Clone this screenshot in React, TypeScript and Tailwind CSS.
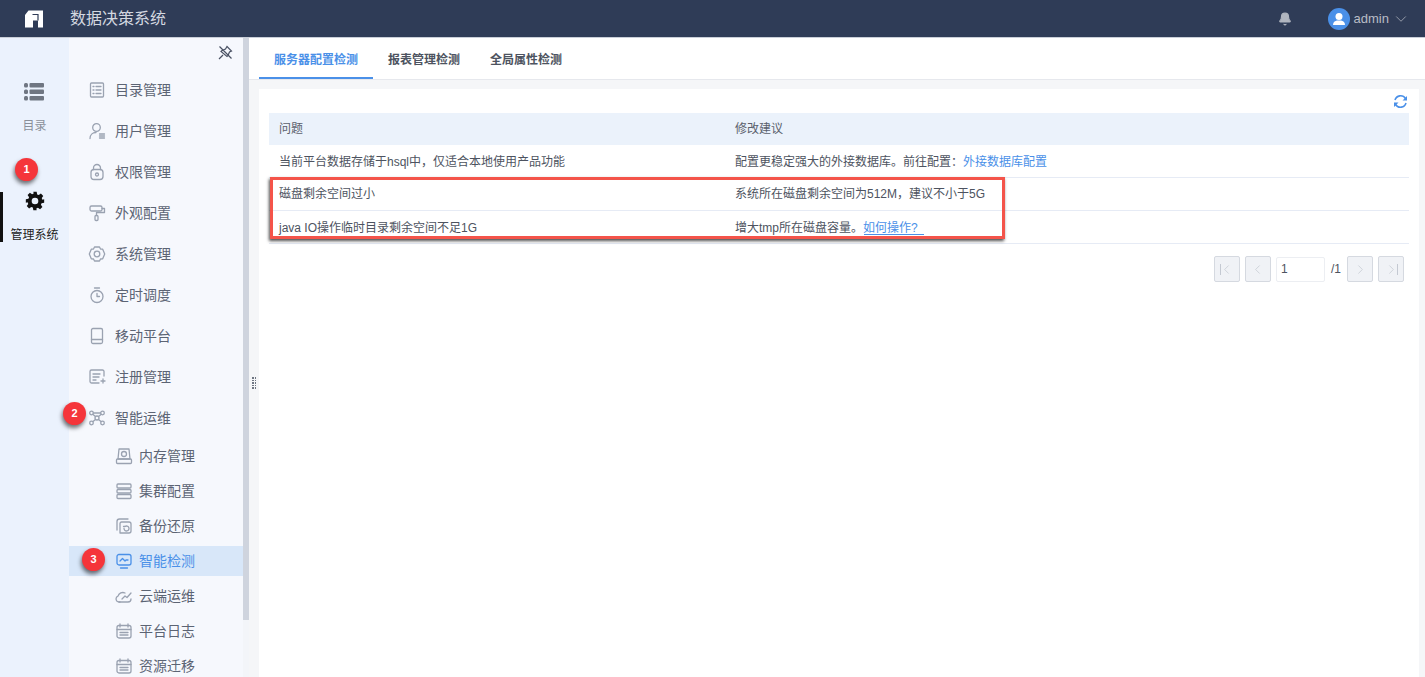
import { Bell, ChevronDown, ChevronLeft, ChevronRight } from 'lucide-react';
import type { ReactNode } from 'react';

const FONT = "font-['Liberation_Sans','Noto_Sans_CJK_SC',sans-serif]";

function Ico({ children }: { children: ReactNode }) {
  return (
    <svg width="18" height="18" viewBox="0 0 18 18" fill="none" stroke="currentColor" strokeWidth="1.3" strokeLinecap="round" strokeLinejoin="round">
      {children}
    </svg>
  );
}

const icons: Record<string, ReactNode> = {
  dir: <><rect x="2.500" y="2" width="13" height="14" rx="1" /><path d="M5 5.500h1M8 5.500h5M5 9h1M8 9h5M5 12.500h1M8 12.500h5" /></>,
  user: <><circle cx="8.500" cy="5.500" r="3.800" /><path d="M2 16.500c0-3.500 2.500-6 6-6M11.500 12h5M11.500 14h5M11.500 16h5" /></>,
  lock: <><rect x="3" y="6.500" width="12" height="10" rx="3" /><path d="M5.500 6.500V5a3.500 3.500 0 0 1 7 0v1.500" /><circle cx="9" cy="11.500" r="1.500" /></>,
  roller: <><rect x="2" y="2" width="12" height="5" rx="1.500" /><path d="M14 4.500h2.500v4H8.500v3" /><rect x="7" y="11.500" width="3" height="5" rx="1" /></>,
  gear: <><path d="M6.500 2h5l1 2 2.200.2 2 4.800-2 4.800-2.200.2-1 2h-5l-1-2-2.200-.2L1.300 9l2-4.800L5.500 4z" /><circle cx="9" cy="9" r="2.800" /></>,
  timer: <><circle cx="9" cy="10.500" r="6" /><path d="M9 7.500v3h2.500M6.500 2h5" /></>,
  mobile: <><rect x="3.500" y="1.500" width="11" height="15" rx="1.500" /><path d="M3.500 12.500h11" /></>,
  reg: <><path d="M16 8V3.500a1.500 1.500 0 0 0-1.500-1.500h-11A1.500 1.500 0 0 0 2 3.500v10A1.500 1.500 0 0 0 3.500 15H11" /><path d="M5 6h7M5 9h6M5 12h3M13 13h4M15 11v4" /></>,
  ops: <><circle cx="3.500" cy="4" r="1.800" /><circle cx="14.500" cy="4" r="1.800" /><circle cx="3.500" cy="14" r="1.800" /><circle cx="14.500" cy="14" r="1.800" /><circle cx="9" cy="9" r="2" /><path d="M5 5.500l2.500 2M13 5.500l-2.500 2M5 12.500l2.500-2M13 12.500l-2.500-2M5.500 4h7" /></>,
  memory: <><path d="M4 2h10l1 10H3z" /><rect x="1.500" y="12" width="15" height="4.500" rx="1" /><circle cx="9" cy="7" r="2.500" /></>,
  cluster: <><rect x="2" y="2" width="14" height="4" rx="1" /><rect x="2" y="7.500" width="14" height="3.500" rx="1" /><rect x="2" y="12.500" width="14" height="4" rx="1" /></>,
  backup: <><path d="M13 2H4.500A2.500 2.500 0 0 0 2 4.500V13" /><path d="M5 16V6.500A1.500 1.500 0 0 1 6.500 5H14a2 2 0 0 1 2 2v7a2 2 0 0 1-2 2z" /><path d="M9 11.500a2.500 2.500 0 1 0 1-2H8.500" /></>,
  check: <><rect x="2" y="2.500" width="14" height="10.500" rx="2" /><path d="M5.500 16h7M5 9l2.500-2.500L10 9l1-1h2" /></>,
  cloud: <><path d="M5 15H4a3 3 0 0 1-1-5.800A5 5 0 0 1 10 6" /><path d="M4 15h9a3 3 0 0 0 3-3M7 12l3-3 2 1.500L16 6" /></>,
  log: <><rect x="2" y="3.500" width="14" height="12.500" rx="2" /><path d="M5 2v3M13 2v3M2 7.500h14M5 10.500h8M5 13h8" /></>,
};

const topMenu = [
  ['目录管理', 'dir'],
  ['用户管理', 'user'],
  ['权限管理', 'lock'],
  ['外观配置', 'roller'],
  ['系统管理', 'gear'],
  ['定时调度', 'timer'],
  ['移动平台', 'mobile'],
  ['注册管理', 'reg'],
  ['智能运维', 'ops'],
];

const subMenu = [
  ['内存管理', 'memory'],
  ['集群配置', 'cluster'],
  ['备份还原', 'backup'],
  ['智能检测', 'check'],
  ['云端运维', 'cloud'],
  ['平台日志', 'log'],
  ['资源迁移', 'log'],
];

function Badge({ n, className }: { n: number; className: string }) {
  return (
    <div className={`absolute flex h-[23px] w-[23px] items-center justify-center rounded-full bg-[#f5353a] text-[11px] font-bold text-white shadow-[-1px_3px_4px_rgba(0,0,0,0.55)] ${className}`}>
      {n}
    </div>
  );
}

function PageBtn({ children }: { children: ReactNode }) {
  return (
    <div className="flex h-[26px] w-[26px] items-center justify-center rounded-[2px] border border-[#d5d9e0] bg-[#f0f2f6] text-[#c4c9d2]">
      {children}
    </div>
  );
}

export default function App() {
  return (
    <div className={`flex h-[677px] w-[1425px] flex-col overflow-hidden bg-white ${FONT}`}>
      {/* шапка */}
      <header className="flex h-[38px] shrink-0 items-center border-b border-[#c9ced8] bg-[#2f3c57]">
        <svg className="ml-[25px]" width="18" height="18" viewBox="0 0 18 18">
          <path fill="#fff" d="M0 5 3.500 0.500H18V17.500H13V10.500H8V17.500H0z" />
          <path fill="none" stroke="#2f3c57" strokeWidth="1.200" d="M7.500 4.500H13V10.500" />
        </svg>
        <span className="ml-[27px] text-base leading-none text-[#d4d8e0]">数据决策系统</span>
        <Bell className="ml-auto text-[#b0b5bf]" size={14} fill="#b0b5bf" />
        <div className="ml-[36px] flex h-[22px] w-[22px] items-center justify-center overflow-hidden rounded-full bg-[#4a90e8]">
          <svg width="14" height="14" viewBox="0 0 14 14" fill="#fff">
            <circle cx="7" cy="4.500" r="3.500" />
            <path d="M1 13c0-3 2-4 4-4.500h4c2 .5 4 1.500 4 4.500z" />
          </svg>
        </div>
        <span className="ml-[4px] text-[13px] text-[#b9bdc6]">admin</span>
        <ChevronDown className="mr-[15px] ml-[3px] text-[#a9aeb9]" size={18} strokeWidth={1.100} />
      </header>

      <div className="flex min-h-0 flex-1">
        {/* левая колонка */}
        <aside className="relative flex w-[69px] shrink-0 flex-col items-center bg-[#ebf2fd]">
          <div className="mt-[45px] flex flex-col items-center text-[#6f7682]">
            <svg width="20" height="18" viewBox="0 0 20 18" fill="currentColor">
              <rect x="0" y="0" width="4" height="4.500" rx="1.500" />
              <rect x="5.500" y="0" width="14.500" height="4.500" rx="1" />
              <rect x="0" y="6.500" width="4" height="4.500" rx="1.500" />
              <rect x="5.500" y="6.500" width="14.500" height="4.500" rx="1" />
              <rect x="0" y="13" width="4" height="4.500" rx="1.500" />
              <rect x="5.500" y="13" width="14.500" height="4.500" rx="1" />
            </svg>
            <span className="mt-[18px] text-xs leading-[14px] text-[#8a909a]">目录</span>
          </div>
          <div className="mt-[59px] flex h-[50px] w-full flex-col items-center border-l-[3px] border-[#111] pr-[3px]">
            <svg className="mt-[-1px]" width="22" height="22" viewBox="0 0 24 24" fill="#111">
              <path fillRule="evenodd" d="M10 1h4l.6 3.100 1.900.8 2.600-1.800 2.800 2.800-1.800 2.600.8 1.900L23 10v4l-3.100.6-.8 1.900 1.800 2.600-2.800 2.800-2.600-1.800-1.900.8L14 23h-4l-.6-3.100-1.900-.8-2.600 1.800-2.800-2.800 1.800-2.600-.8-1.900L1 14v-4l3.100-.6.8-1.900-1.800-2.600 2.800-2.800 2.600 1.800 1.900-.8zM12 8a4 4 0 1 0 0 8 4 4 0 0 0 0-8z" />
            </svg>
            <span className="mt-[17px] text-xs leading-[14px] whitespace-nowrap text-[#222]">管理系统</span>
          </div>
          <Badge n={1} className="top-[120px] left-[15px]" />
          <Badge n={2} className="top-[364px] left-[63px] z-10" />
          <Badge n={3} className="top-[510px] left-[82px] z-10" />
        </aside>

        {/* меню */}
        <nav className="relative flex w-[174px] shrink-0 flex-col overflow-hidden bg-[#f6f8fd]">
          <svg className="absolute top-[7px] left-[149px] text-[#4a5264]" width="15" height="15" viewBox="0 0 15 15" fill="none" stroke="currentColor" strokeWidth="1.200">
            <path d="M9 1.500l4.500 4.500-2 1-1.500 3.500-1 1L3 6.500l1-1 3.500-1.500zM5 10l-4 4M1.500 1.500l12 12" />
          </svg>
          <div className="mt-[31px] flex flex-col">
            {topMenu.map(([label, icon]) => (
              <div key={label} className="flex h-[41px] items-center pl-[19px] text-[#5c6474]">
                <span className="text-[#9aa2b1]"><Ico>{icons[icon]}</Ico></span>
                <span className="ml-[9px] text-sm">{label}</span>
              </div>
            ))}
          </div>
          <div className="flex flex-col">
            {subMenu.map(([label, icon]) => (
              <div key={label} className="flex h-[35px] shrink-0 items-center">
                <div className={`flex h-[30px] w-full items-center pl-[46px] ${label === '智能检测' ? 'bg-[#d8e7f9] text-[#4a90e8]' : 'text-[#5c6474]'}`}>
                  <span className={label === '智能检测' ? 'text-[#4a90e8]' : 'text-[#9aa2b1]'}>
                    <Ico>{icons[icon]}</Ico>
                  </span>
                  <span className="ml-[6px] text-sm">{label}</span>
                </div>
              </div>
            ))}
          </div>
        </nav>

        {/* полоса прокрутки */}
        <div className="flex w-[6px] shrink-0 flex-col bg-[#f3f5f9]">
          <div className="h-[582px] bg-[#cfd4de]" />
        </div>

        {/* контент */}
        <main className="flex min-w-0 flex-1 flex-col bg-[#f5f6f8]">
          <div className="flex h-[42px] shrink-0 items-end border-b border-[#e6e8ed] bg-white pl-[10px] text-xs font-bold text-[#4d5360]">
            <div className="flex h-[41px] w-[114px] items-center justify-center border-b-2 border-[#4a90e8] pt-[4px] text-[#4a90e8]">服务器配置检测</div>
            <div className="ml-[15px] flex h-[41px] items-center pt-[2px]">报表管理检测</div>
            <div className="ml-[30px] flex h-[41px] items-center pt-[2px]">全局属性检测</div>
          </div>

          <div className="relative mt-[9px] mr-[6px] ml-[10px] flex-1 bg-white px-[10px] pt-[24px]">
            <svg className="absolute top-[5px] right-[11px] text-[#4a90e8]" width="15" height="15" viewBox="0 0 15 15" fill="none" stroke="currentColor" strokeWidth="1.600">
              <path d="M2 6a5.800 5.800 0 0 1 10.500-1.500M13 9a5.800 5.800 0 0 1-10.500 1.500" />
              <path fill="currentColor" stroke="none" d="M14 2v4.500H9.500zM1 13V8.500h4.500z" />
            </svg>
            <div className="flex h-[32px] items-center bg-[#ebf2fb] text-xs text-[#5a606c]">
              <div className="w-[456px] pl-[10px]">问题</div>
              <div className="pl-[10px]">修改建议</div>
            </div>
            <div className="flex h-[33px] items-center border-b border-[#e6ebf5] pt-[1px] text-xs text-[#4d5360]">
              <div className="w-[456px] pl-[10px]">当前平台数据存储于hsql中，仅适合本地使用产品功能</div>
              <div className="pl-[10px]">配置更稳定强大的外接数据库。前往配置：<span className="text-[#4a90e8]">外接数据库配置</span></div>
            </div>
            <div className="flex h-[33px] items-center border-b border-[#e6ebf5] text-xs text-[#4d5360]">
              <div className="w-[456px] pl-[10px]">磁盘剩余空间过小</div>
              <div className="pl-[10px]">系统所在磁盘剩余空间为512M，建议不小于5G</div>
            </div>
            <div className="flex h-[33px] items-center border-b border-[#e6ebf5] pt-[1px] text-xs text-[#4d5360]">
              <div className="w-[456px] pl-[10px]">java IO操作临时目录剩余空间不足1G</div>
              <div className="pl-[10px]">增大tmp所在磁盘容量。<span className="text-[#4a90e8]">如何操作?</span></div>
            </div>

            {/* красная рамка-аннотация */}
            <div className="pointer-events-none absolute top-[88px] left-[11px] h-[62px] w-[735px] border-[3px] border-[#f4544a] shadow-[-1px_2px_3px_rgba(0,0,0,0.7)]" />
            <div className="absolute top-[145px] left-[605px] h-px w-[60px] bg-[#4a90e8]" />

            <div className="mt-[12px] flex items-center justify-end gap-[5px] pr-[5px]">
              <PageBtn>
                <span className="mr-[-2px] h-[11px] w-px bg-[#c4c9d2]" />
                <ChevronLeft size={15} strokeWidth={1.200} />
              </PageBtn>
              <PageBtn><ChevronLeft size={15} strokeWidth={1.200} /></PageBtn>
              <div className="flex h-[25px] w-[49px] items-center rounded-[2px] border border-[#eceef2] pl-[4px] text-xs text-[#4d5360]">1</div>
              <span className="mx-[1px] text-xs text-[#4d5360]">/1</span>
              <PageBtn><ChevronRight size={15} strokeWidth={1.200} /></PageBtn>
              <PageBtn>
                <ChevronRight size={15} strokeWidth={1.200} />
                <span className="ml-[-2px] h-[11px] w-px bg-[#c4c9d2]" />
              </PageBtn>
            </div>

            {/* ручка панели */}
            <div className="absolute top-[288px] left-[-7px] grid grid-cols-2 gap-[1px]">
              {Array.from({ length: 10 }).map((_, i) => (
                <span key={i} className="h-[1.500px] w-[1.500px] bg-[#6f7682]" />
              ))}
            </div>
          </div>
        </main>
      </div>
    </div>
  );
}
